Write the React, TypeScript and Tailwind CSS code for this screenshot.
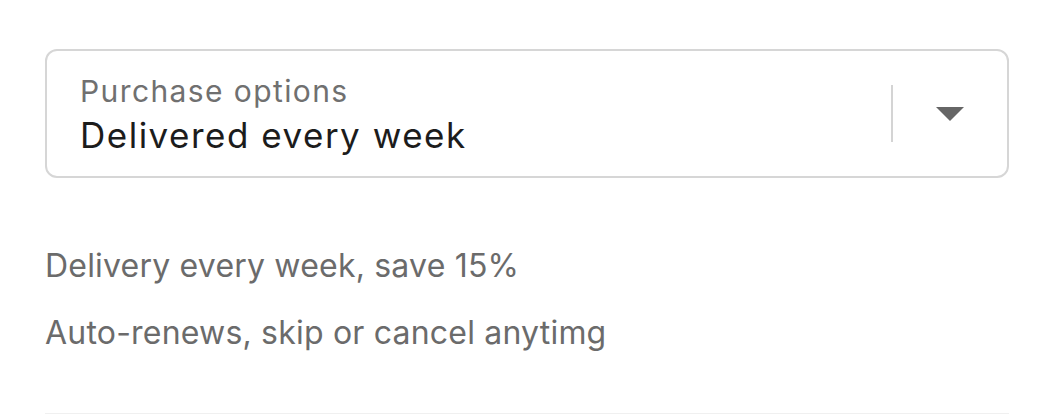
import React from "react";

export default function App() {
  return (
    <div
      className="w-[1048px] h-[414px] bg-white overflow-hidden"
      style={{ fontFamily: "Inter, 'Noto Sans', sans-serif" }}
    >
      <div className="ml-[45px] w-[964px] pt-[49px]">
        {/* Purchase options select */}
        <div className="h-[129px] rounded-[12px] border-2 border-[#d6d6d6] flex items-center pl-[33px] pr-[43px]">
          <div className="flex-1 flex flex-col pt-[7px]">
            <span className="text-[30px] leading-[36px] text-[#707070] tracking-[1.4px]">
              Purchase options
            </span>
            <span className="text-[35px] leading-[52px] text-[#1c1c1c] tracking-[1.5px]">
              Delivered every week
            </span>
          </div>
          <div className="w-[2px] h-[57px] bg-[#d4d4d4]" />
          <div className="ml-[43px] flex items-center">
            <svg width="28" height="14" viewBox="0 0 28 14">
              <path d="M0 0 H28 L14 14 Z" fill="#666666" />
            </svg>
          </div>
        </div>

        {/* Plan details */}
        <div className="mt-[68px] flex flex-col gap-[27px] text-[32px] leading-[40px] text-[#6b6b6b] tracking-[0.2px]">
          <span>Delivery every week, save 15%</span>
          <span>Auto-renews, skip or cancel anytimg</span>
        </div>

        <div className="mt-[60px] h-px bg-[#f0f0f0]" />
      </div>
    </div>
  );
}
